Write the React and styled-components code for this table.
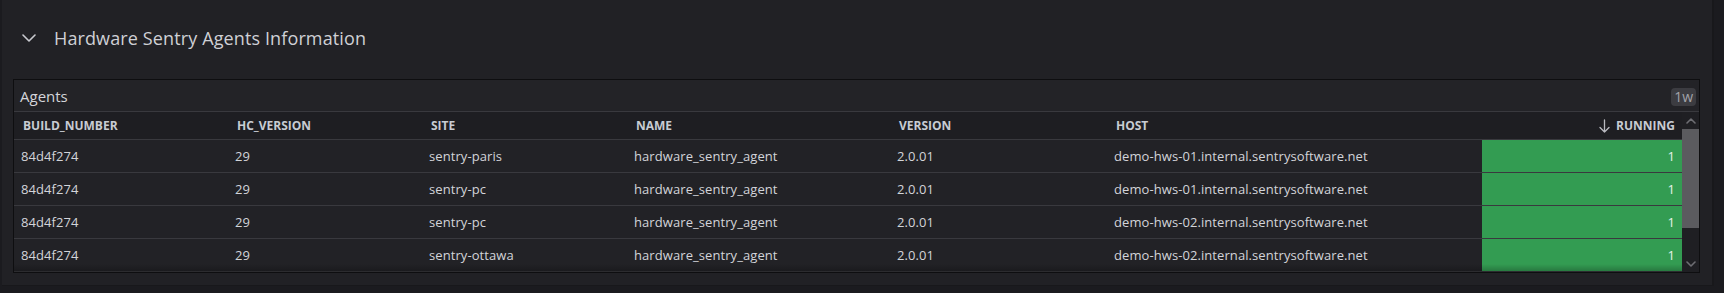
import React from "react";
import styled, { createGlobalStyle } from "styled-components";

const GlobalStyle = createGlobalStyle`
  html, body {
    margin: 0;
    padding: 0;
    background: #1b1b1f;
    font-family: "Open Sans", "Noto Sans", sans-serif;
    -webkit-font-smoothing: antialiased;
  }
  * {
    box-sizing: border-box;
  }
`;

const columns = [
  { key: "build", label: "BUILD_NUMBER", width: 214 },
  { key: "hc", label: "HC_VERSION", width: 194 },
  { key: "site", label: "SITE", width: 205 },
  { key: "name", label: "NAME", width: 263 },
  { key: "version", label: "VERSION", width: 217 },
  { key: "host", label: "HOST", width: 375 },
];

const rows = [
  { build: "84d4f274", hc: "29", site: "sentry-paris", name: "hardware_sentry_agent", version: "2.0.01", host: "demo-hws-01.internal.sentrysoftware.net", running: 1 },
  { build: "84d4f274", hc: "29", site: "sentry-pc", name: "hardware_sentry_agent", version: "2.0.01", host: "demo-hws-01.internal.sentrysoftware.net", running: 1 },
  { build: "84d4f274", hc: "29", site: "sentry-pc", name: "hardware_sentry_agent", version: "2.0.01", host: "demo-hws-02.internal.sentrysoftware.net", running: 1 },
  { build: "84d4f274", hc: "29", site: "sentry-ottawa", name: "hardware_sentry_agent", version: "2.0.01", host: "demo-hws-02.internal.sentrysoftware.net", running: 1 },
];

const Chevron = ({ up }) => (
  <svg width="10" height="6" viewBox="0 0 10 6" fill="none">
    <path
      d={up ? "M1 5 L5 1 L9 5" : "M1 1 L5 5 L9 1"}
      stroke="#6e6e73"
      strokeWidth="1.6"
      strokeLinecap="round"
      strokeLinejoin="round"
    />
  </svg>
);

const App = () => {
  return (
    <>
      <GlobalStyle />
      <Section>
        <RowHeader>
          <svg width="14" height="8" viewBox="0 0 14 8" fill="none">
            <path d="M1 1 L7 7 L13 1" stroke="#c9cad0" strokeWidth="1.6" strokeLinecap="round" strokeLinejoin="round" />
          </svg>
          <RowTitle>Hardware Sentry Agents Information</RowTitle>
        </RowHeader>
        <Panel>
          <PanelHeader>
            <PanelTitle>Agents</PanelTitle>
            <Badge>1w</Badge>
          </PanelHeader>
          <TableWrap>
            <Table>
              <HeadRow>
                {columns.map((c) => (
                  <HeadCell key={c.key} $width={c.width}>
                    {c.label}
                  </HeadCell>
                ))}
                <HeadCell $grow $right>
                  <svg width="11" height="14" viewBox="0 0 11 14" fill="none">
                    <path d="M5.5 1 V13 M1 8.5 L5.5 13 L10 8.5" stroke="#b9bac0" strokeWidth="1.3" strokeLinecap="round" strokeLinejoin="round" />
                  </svg>
                  RUNNING
                </HeadCell>
              </HeadRow>
              {rows.map((r, i) => (
                <BodyRow key={i}>
                  {columns.map((c) => (
                    <Cell key={c.key} $width={c.width}>
                      {r[c.key]}
                    </Cell>
                  ))}
                  <Cell $grow $right $green>
                    {r.running}
                  </Cell>
                </BodyRow>
              ))}
              <BottomShade />
            </Table>
            <Scrollbar>
              <ScrollArrow>
                <Chevron up />
              </ScrollArrow>
              <Thumb />
              <ScrollArrow $bottom>
                <Chevron />
              </ScrollArrow>
            </Scrollbar>
          </TableWrap>
        </Panel>
      </Section>
    </>
  );
};

const Section = styled.div`
  margin-left: 2px;
  width: 1712px;
  height: 286px;
  background: #212125;
  border-right: 2px solid #18181b;
  border-bottom: 1px solid #18181b;
  padding: 79px 14px 0 11px;
  position: relative;
`;

const RowHeader = styled.div`
  position: absolute;
  top: 26px;
  left: 20px;
  display: flex;
  align-items: center;
  gap: 18px;
  height: 24px;
`;

const RowTitle = styled.span`
  font-size: 18px;
  color: #cfd0d5;
  letter-spacing: 0.12px;
`;

const Panel = styled.div`
  width: 1687px;
  height: 194px;
  background: #232327;
  border: 1px solid #0e0e10;
  display: flex;
  flex-direction: column;
`;

const PanelHeader = styled.div`
  height: 32px;
  display: flex;
  align-items: center;
  justify-content: space-between;
  padding: 0 3px 0 6px;
  border-bottom: 1px solid #39393e;
  flex-shrink: 0;
`;

const PanelTitle = styled.span`
  font-size: 15px;
  color: #d4d5da;
`;

const Badge = styled.span`
  background: #3c3c41;
  color: #a3a4aa;
  font-size: 14px;
  border-radius: 4px;
  height: 18px;
  line-height: 18px;
  padding: 0 3px;
  margin-top: 2px;
`;

const TableWrap = styled.div`
  flex: 1;
  display: flex;
  overflow: hidden;
`;

const Table = styled.div`
  flex: 1;
  display: flex;
  flex-direction: column;
  position: relative;
  overflow: hidden;
`;

const HeadRow = styled.div`
  display: flex;
  height: 28px;
  flex-shrink: 0;
  background: #1e1e22;
  border-bottom: 1px solid #39393e;
`;

const BodyRow = styled.div`
  display: flex;
  height: 33px;
  flex-shrink: 0;
  border-bottom: 1px solid #39393e;
  background: #222226;
`;

const HeadCell = styled.div`
  width: ${(p) => (p.$width ? `${p.$width}px` : "auto")};
  flex: ${(p) => (p.$grow ? "1" : "none")};
  display: flex;
  align-items: center;
  justify-content: ${(p) => (p.$right ? "flex-end" : "flex-start")};
  gap: 6px;
  padding: 0 7px 0 9px;
  font-size: 12px;
  font-weight: 700;
  color: #c8ccd3;
`;

const Cell = styled.div`
  width: ${(p) => (p.$width ? `${p.$width}px` : "auto")};
  flex: ${(p) => (p.$grow ? "1" : "none")};
  display: flex;
  align-items: center;
  justify-content: ${(p) => (p.$right ? "flex-end" : "flex-start")};
  padding: 0 7px;
  font-size: 13px;
  letter-spacing: 0.08px;
  color: ${(p) => (p.$green ? "#e6f2e8" : "#d3d4d9")};
  background: ${(p) => (p.$green ? "#339c52" : "transparent")};
  white-space: nowrap;
`;

const BottomShade = styled.div`
  position: absolute;
  left: 0;
  right: 0;
  bottom: 0;
  height: 8px;
  background: linear-gradient(to bottom, rgba(0, 0, 0, 0), rgba(0, 0, 0, 0.25));
  pointer-events: none;
`;

const Scrollbar = styled.div`
  width: 17px;
  flex-shrink: 0;
  background: #1f1f23;
  display: flex;
  flex-direction: column;
`;

const ScrollArrow = styled.div`
  height: 17px;
  display: flex;
  align-items: center;
  justify-content: center;
  margin-top: ${(p) => (p.$bottom ? "auto" : "0")};
`;

const Thumb = styled.div`
  height: 99px;
  background: #5b5b5f;
`;

export default App;
